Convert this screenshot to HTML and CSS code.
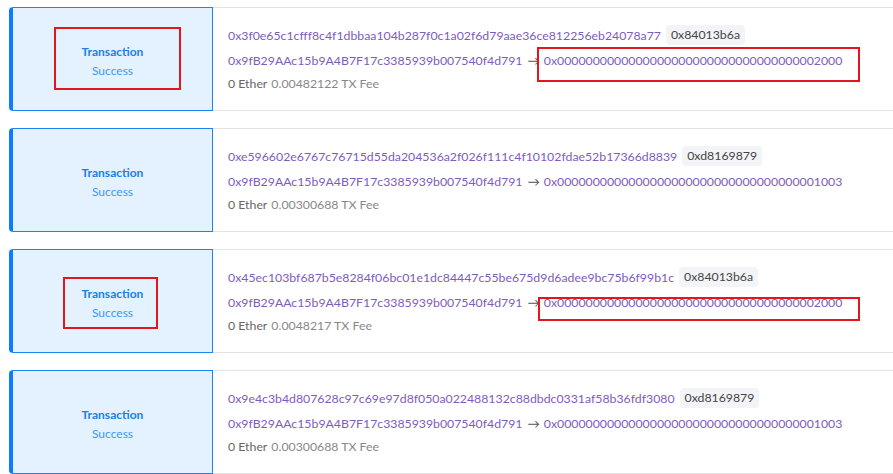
FILE: index.html
```html
<!DOCTYPE html>
<html>
<head>
<meta charset="utf-8">
<link rel="stylesheet" href="styles.css">
</head>
<body>
<div class="list">
  <div class="card">
    <div class="tile"><span class="t-title">Transaction</span><span class="t-status">Success</span></div>
    <div class="info">
      <div class="row"><span class="hash">0x3f0e65c1cfff8c4f1dbbaa104b287f0c1a02f6d79aae36ce812256eb24078a77</span><span class="badge">0x84013b6a</span></div>
      <div class="row"><span class="hash">0x9fB29AAc15b9A4B7F17c3385939b007540f4d791</span><span class="arrow">→</span><span class="hash">0x0000000000000000000000000000000000002000</span></div>
      <div class="row fee"><span class="val">0 Ether</span><span class="muted">0.00482122 TX Fee</span></div>
    </div>
    <div class="mark m1"></div>
    <div class="mark m2"></div>
  </div>
  <div class="card">
    <div class="tile"><span class="t-title">Transaction</span><span class="t-status">Success</span></div>
    <div class="info">
      <div class="row"><span class="hash">0xe596602e6767c76715d55da204536a2f026f111c4f10102fdae52b17366d8839</span><span class="badge">0xd8169879</span></div>
      <div class="row"><span class="hash">0x9fB29AAc15b9A4B7F17c3385939b007540f4d791</span><span class="arrow">→</span><span class="hash">0x0000000000000000000000000000000000001003</span></div>
      <div class="row fee"><span class="val">0 Ether</span><span class="muted">0.00300688 TX Fee</span></div>
    </div>
  </div>
  <div class="card">
    <div class="tile"><span class="t-title">Transaction</span><span class="t-status">Success</span></div>
    <div class="info">
      <div class="row"><span class="hash">0x45ec103bf687b5e8284f06bc01e1dc84447c55be675d9d6adee9bc75b6f99b1c</span><span class="badge">0x84013b6a</span></div>
      <div class="row"><span class="hash">0x9fB29AAc15b9A4B7F17c3385939b007540f4d791</span><span class="arrow">→</span><span class="hash">0x0000000000000000000000000000000000002000</span></div>
      <div class="row fee"><span class="val">0 Ether</span><span class="muted">0.0048217 TX Fee</span></div>
    </div>
    <div class="mark m3"></div>
    <div class="mark m4"></div>
  </div>
  <div class="card">
    <div class="tile"><span class="t-title">Transaction</span><span class="t-status">Success</span></div>
    <div class="info">
      <div class="row"><span class="hash">0x9e4c3b4d807628c97c69e97d8f050a022488132c88dbdc0331af58b36fdf3080</span><span class="badge">0xd8169879</span></div>
      <div class="row"><span class="hash">0x9fB29AAc15b9A4B7F17c3385939b007540f4d791</span><span class="arrow">→</span><span class="hash">0x0000000000000000000000000000000000001003</span></div>
      <div class="row fee"><span class="val">0 Ether</span><span class="muted">0.00300688 TX Fee</span></div>
    </div>
  </div>
</div>
</body>
</html>
```

FILE: styles.css
```css
html, body {
  margin: 0;
  padding: 0;
  background: #ffffff;
  overflow: hidden;
}
body {
  font-family: "Lato", "Open Sans", sans-serif;
  font-size: 12.3px;
  color: #333;
}
.list {
  padding: 7px 0 0 9px;
  width: 1000px;
}
.card {
  position: relative;
  display: flex;
  height: 104px;
  margin-bottom: 17px;
}
.tile {
  box-sizing: border-box;
  width: 204px;
  flex: none;
  background: #e4f1fe;
  border: 1px solid #1a84f2;
  border-left: 4px solid #0b7bff;
  border-radius: 4px 0 0 4px;
  display: flex;
  flex-direction: column;
  align-items: center;
  justify-content: center;
  padding-top: 4px;
  font-size: 12px;
}
.t-title {
  font-weight: 700;
  color: #1a80e6;
  line-height: 19px;
}
.t-status {
  color: #3d97f5;
  line-height: 19px;
}
.info {
  flex: 1;
  box-sizing: border-box;
  border-top: 1px solid #e3e3e3;
  border-bottom: 1px solid #e3e3e3;
  padding: 16px 0 0 15px;
  display: flex;
  flex-direction: column;
}
.row {
  display: flex;
  align-items: center;
  height: 22px;
  white-space: nowrap;
}
.row:first-child { margin-bottom: 3px; }
.row:nth-child(2) { margin-bottom: 1px; }
.hash { color: #7e5cbd; }
.arrow { color: #555; margin: 0 4px 0 5px; }
.badge {
  margin-left: 5px;
  background: #f3f4f8;
  color: #444;
  border-radius: 4px;
  padding: 0 5px;
  height: 20px;
  line-height: 20px;
}
.val { color: #666; margin-right: 4px; }
.muted { color: #888; }
.mark {
  position: absolute;
  border: 2px solid #e3161b;
  box-sizing: border-box;
}
.m1 { left: 45px; top: 20px; width: 127px; height: 63px; }
.m2 { left: 528px; top: 40px; width: 323px; height: 35px; }
.m3 { left: 54px; top: 28px; width: 95px; height: 52px; }
.m4 { left: 529px; top: 48px; width: 322px; height: 24px; }
```
